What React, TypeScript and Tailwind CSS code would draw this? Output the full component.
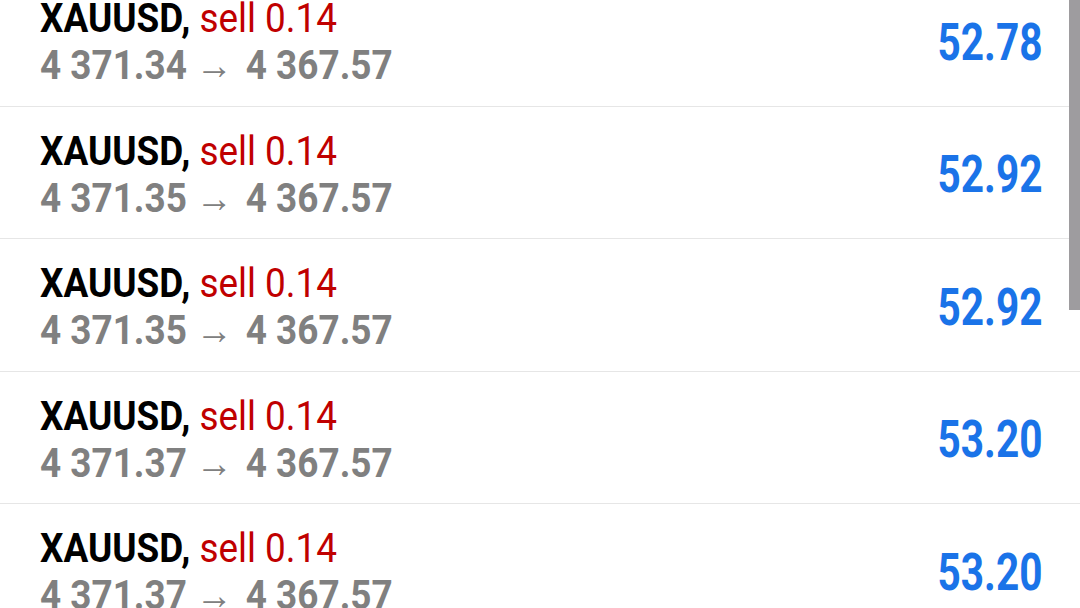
const trades = [
  { open: "4 371.34", close: "4 367.57", profit: "52.78" },
  { open: "4 371.35", close: "4 367.57", profit: "52.92" },
  { open: "4 371.35", close: "4 367.57", profit: "52.92" },
  { open: "4 371.37", close: "4 367.57", profit: "53.20" },
  { open: "4 371.37", close: "4 367.57", profit: "53.20" },
];

function TradeRow({ open, close, profit }: { open: string; close: string; profit: string }) {
  return (
    <div className="flex h-[132.5px] items-center justify-between border-b border-[#e6e6e6] pl-[40px] pr-[38px]">
      <div className="mt-[5px] origin-left scale-x-[0.9] whitespace-nowrap">
        <div className="text-[41px] leading-[47px]">
          <span className="font-bold text-black">XAUUSD,</span>{" "}
          <span className="text-[#c00000]">sell 0.14</span>
        </div>
        <div className="text-[41px] font-bold leading-[47px] text-[#808080]">
          {open} <span className="mr-[4px] font-normal">→</span> {close}
        </div>
      </div>
      <div className="mt-[6px] origin-right scale-x-[0.78] text-[52px] font-bold leading-none text-[#1a73e8]">
        {profit}
      </div>
    </div>
  );
}

export default function App() {
  return (
    <div
      className="relative h-[608px] w-[1080px] overflow-hidden bg-white"
      style={{ fontFamily: "Roboto, 'Liberation Sans', sans-serif" }}
    >
      <div className="-mt-[26px]">
        {trades.map((t, i) => (
          <TradeRow key={i} {...t} />
        ))}
      </div>
      <div className="absolute right-0 top-0 h-[310px] w-[11px] bg-[#9e9c9f]" />
    </div>
  );
}
